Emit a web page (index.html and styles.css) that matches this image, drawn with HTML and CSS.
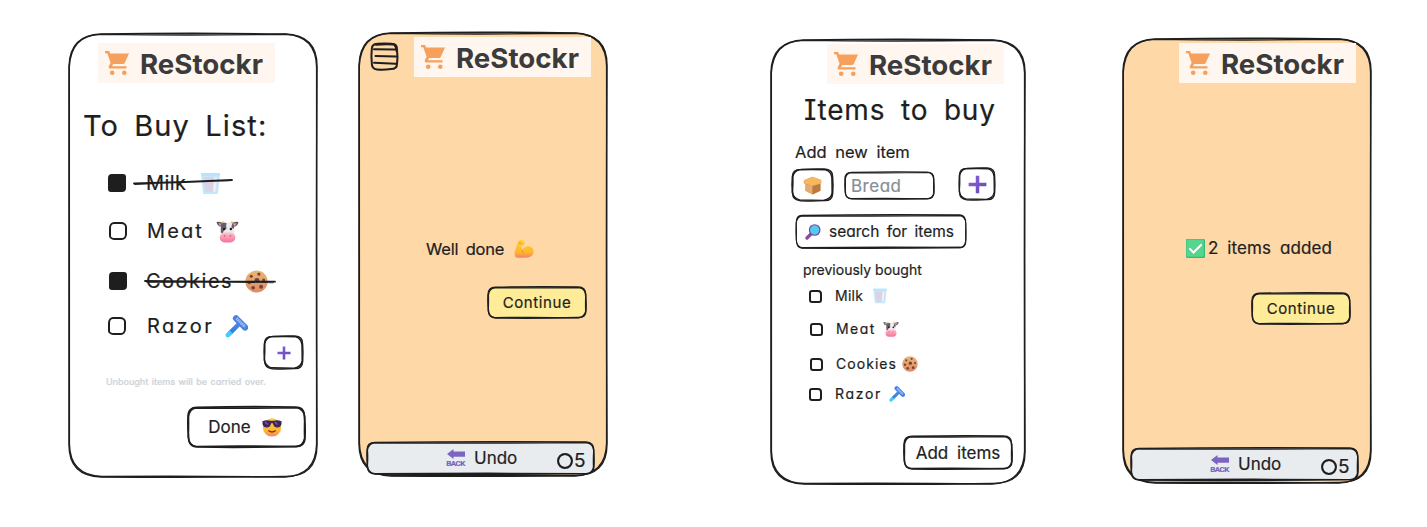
FILE: index.html
```html
<!DOCTYPE html>
<html lang="en">
<head>
<meta charset="utf-8">
<title>ReStockr wireframes</title>
<link rel="stylesheet" href="styles.css">
</head>
<body>
<svg class="defs" width="0" height="0" aria-hidden="true">
  <defs>
    <linearGradient id="g-violet" x1="0" y1="0" x2="1" y2="1"><stop offset="0" stop-color="#8b62d9"/><stop offset="1" stop-color="#6248b5"/></linearGradient>
    <linearGradient id="g-skin" x1="0" y1="0" x2="0" y2="1"><stop offset="0" stop-color="#ffd02e"/><stop offset=".7" stop-color="#ffb52e"/><stop offset="1" stop-color="#f4806a"/></linearGradient>
    <linearGradient id="g-blue" x1="1" y1="0" x2="0" y2="1"><stop offset="0" stop-color="#4a86e8"/><stop offset=".7" stop-color="#2f7fe0"/><stop offset="1" stop-color="#3fd0ff"/></linearGradient>
    <linearGradient id="g-cookie" x1="0" y1="0" x2="0" y2="1"><stop offset="0" stop-color="#e9b877"/><stop offset="1" stop-color="#dd8a66"/></linearGradient>
    <linearGradient id="g-nose" x1="0" y1="0" x2="0" y2="1"><stop offset="0" stop-color="#ffc4c8"/><stop offset="1" stop-color="#f4709a"/></linearGradient>
  </defs>
  <symbol id="cart" viewBox="0 0 24 24">
    <path d="M0 0h4l1.200 2.500H24l-4.300 9.600q-.5 1-1.700 1H8.200L7 15.300h14.500v2.300H5.500q-2.500-.4-1.600-2.700L5.600 11.800 2.300 2.300H0z" fill="#f5a05c"/>
    <circle cx="7.200" cy="21.700" r="2.300" fill="#f5a05c"/><circle cx="19.300" cy="21.700" r="2.300" fill="#f5a05c"/>
  </symbol>
  <symbol id="milk" viewBox="0 0 24 24">
    <path d="M2 1h20l-2.300 22H4.300z" fill="#c3e7fb"/><path d="M5 5.500h14L17.500 20.500H6.500z" fill="#d9d3e3"/><path d="M15.500 5.500H19L17.500 20.500h-3z" fill="#f1ecf7"/><path d="M2 1h20l-.3 3H2.300z" fill="#b4e4ff"/>
  </symbol>
  <symbol id="cow" viewBox="0 0 24 24">
    <path d="M7 4Q6 3 7 .4L10 4zM17 4q1-1 0-3.600L14 4z" fill="#f3c37b"/>
    <path d="M.5 2Q5 1 8 4L6 7Q1.500 7 .5 2z" fill="#5b565f"/><path d="M2.500 3Q5 3 7 5L5.500 6Q3 6 2.500 3z" fill="#e88f9c"/>
    <path d="M23.500 2Q19 1 16 4l2 3q4.500 0 5.500-5z" fill="#5b565f"/><path d="M21.500 3Q19 3 17 5l1.500 1q2.500 0 3-3z" fill="#e88f9c"/>
    <path d="M5 4Q12 1.500 19 4v12H5z" fill="#eeeaf0"/><path d="M5 4q3-1.500 6-1-1 4 0 6-3 1-4 5L5 13z" fill="#656067"/><path d="M17 3.500q2 .5 2 4l-1 2-2-2z" fill="#656067"/>
    <circle cx="8.500" cy="9.500" r="1.300" fill="#211d25"/><circle cx="15.500" cy="9.500" r="1.300" fill="#211d25"/>
    <rect x="3.800" y="13" width="16.400" height="10.500" rx="5.200" fill="url(#g-nose)"/><circle cx="9" cy="16.500" r=".9" fill="#d85a80"/><circle cx="15" cy="16.500" r=".9" fill="#d85a80"/>
  </symbol>
  <symbol id="cookie" viewBox="0 0 24 24">
    <circle cx="12" cy="12" r="11.600" fill="url(#g-cookie)"/>
    <g fill="#74423b"><circle cx="6.500" cy="6.500" r="1.600"/><circle cx="14.500" cy="4.300" r="1.700"/><circle cx="12.500" cy="10.800" r="2.500"/><circle cx="19.500" cy="10.500" r="1.600"/><circle cx="4.500" cy="13" r="1.800"/><circle cx="8.500" cy="18.500" r="1.900"/><circle cx="16.800" cy="17.500" r="2"/></g>
  </symbol>
  <symbol id="razor" viewBox="0 0 24 24">
    <path d="M14.500 9.500 3 21" stroke="url(#g-blue)" stroke-width="4.600" stroke-linecap="round"/><path d="M5 19l-2 2" stroke="#3fd0ff" stroke-width="4.200" stroke-linecap="round"/>
    <path d="M11.500 3.500 21 13" stroke="#4384e6" stroke-width="6.500" stroke-linecap="round"/><path d="M12 3.500 20.800 12.300" stroke="#b3b6e6" stroke-width="3" stroke-dasharray="1.500 .5"/>
  </symbol>
  <symbol id="cool" viewBox="0 0 24 24">
    <circle cx="12" cy="12.500" r="11" fill="url(#g-skin)"/>
    <path d="M.5 5q5-2 9.500-.5h4Q18.500 3 23.500 5q.5 7-4.500 7.500-5 .5-6-5h-2q-1 5.500-6 5Q0 12 .5 5z" fill="#40265f"/><path d="M3.500 6 7 9M15.500 6l3 3" stroke="#8155c4" stroke-width="1.300"/>
    <path d="M8 16.500q4 3 8 0" fill="none" stroke="#733324" stroke-width="1.500" stroke-linecap="round"/>
  </symbol>
  <symbol id="arm" viewBox="0 0 24 24">
    <path d="M5 2.500Q10-.5 12.500 3.500q1 3-1.500 4.500H8.500l1.500 5Q14 7.500 19.500 9 24.500 12 23.300 17 21 22.500 14 22.500H3.500Q0 21.500 1 15z" fill="url(#g-skin)"/><path d="M10 13q-.5 3 2 4.500M6 4.500l3 1" fill="none" stroke="#e98e25" stroke-width="1.100"/>
  </symbol>
  <symbol id="plus" viewBox="0 0 24 24"><path d="M9.800.8h4.400v9h9v4.400h-9v9H9.800v-9h-9V9.800h9z" fill="url(#g-violet)"/></symbol>
  <symbol id="bread" viewBox="0 0 24 24">
    <path d="M1 5.500 12 1l11 4v4l-1 1v8.500L12 23.500 3 18.500V10L1 9z" fill="#d79550"/><path d="M1 5.500 12 1l11 4v4l-11 3.500L2 9z" fill="#f5b75f"/><path d="M12 12.500V23.500L3 18.500V10z" fill="#e4ab72"/><path d="M12 12.500 22 10v8.500l-10 5z" fill="#bd7942"/>
  </symbol>
  <symbol id="lens" viewBox="0 0 24 24">
    <path d="M9.500 14.500 3 21" stroke="#8b4a9b" stroke-width="5" stroke-linecap="round"/><circle cx="14.500" cy="9" r="8.800" fill="#6a4b9d"/><circle cx="14.500" cy="9" r="7" fill="#55c8ee"/>
  </symbol>
  <symbol id="arrow" viewBox="0 0 18 10"><path d="M0 5 6.500 0v2.500H18v5.200H6.500V10z" fill="#7c65c1"/></symbol>
  <symbol id="check" viewBox="0 0 24 24">
    <rect width="24" height="24" rx="1.500" fill="#35b877"/><rect x=".5" y=".5" width="22" height="22" rx="1" fill="#55d58d"/><path d="M5 12.500l4.500 4.500L19 7.500" fill="none" stroke="#fff" stroke-width="2.600" stroke-linecap="round"/>
  </symbol>
  <symbol id="phone-frame" viewBox="0 0 248 443" overflow="visible" preserveAspectRatio="none">
    <path d="M32 0Q124-1.500 216 0Q248 1 248 32Q247 220 248 411Q248 443 216 442.500Q124 444 32 443Q0 442 0 411Q-.6 220 0 32Q1 1 32 0z"/>
    <path d="M31 .4Q124 1.500 217 .3Q247 2 247.600 33Q248.400 220 247.600 410Q247 442 215 443Q124 441.800 33 442.500Q1 441.500 .4 410Q.8 220 .3 33Q2 1.500 31 .4z" fill="none"/>
  </symbol>
  <symbol id="box-square" viewBox="0 0 38 33" overflow="visible" preserveAspectRatio="none">
    <path d="M8 .4Q19-.2 30 0Q38 .5 37.600 8Q38.300 16 37.700 25Q37.500 33 30 32.600Q19 33.300 8 32.700Q.6 32 .6 25Q-.4 16 .3 8Q.5 .4 8 .4z"/>
    <path d="M7 .8Q19 .3 31 .8Q36.500 2.500 37 9Q37.200 17 37.200 25Q36 31.500 29 32.300Q19 32 7 31.800Q1.400 30 .3 24Q1 16 .8 8Q1.500 2 7 .8z" fill="none"/>
  </symbol>
  <symbol id="box-wide" viewBox="0 0 100 32" overflow="visible" preserveAspectRatio="none">
    <path d="M8 .3Q50-.7 92 0Q100 0 99.500 8Q100.500 16 100 24Q100 32 92 31.500Q50 32.700 8 32Q0 31.500 .5 24Q-.5 16 0 8Q0 0 8 .3z"/>
    <path d="M7 .8Q50 1.200 93 .6Q98.700 1.500 99.800 8Q99.400 17 99.700 25Q98.600 31.300 92 31.800Q50 31 7 31.600Q1 31 .2 24Q.6 16 .4 8Q1.400 1.200 7 .8z" fill="none"/>
  </symbol>
  <symbol id="box-bar" viewBox="0 0 228 32" overflow="visible" preserveAspectRatio="none">
    <path d="M8 .4Q114-.9 220 0Q228 .4 227.600 8Q228.500 16 228 24Q228 32 220 31.600Q114 32.900 8 32Q0 31.500 .5 24Q-.5 16 .1 8Q0 .4 8 .4z"/>
    <path d="M8 .8Q114 1.300 220 .6Q226.700 1.500 227.800 8Q227.200 17 227.500 25Q226.600 31.200 220 31.600Q114 31 8 31.700Q1.500 31 .3 24Q1 16 .4 8Q1.500 1.400 8 .8z" fill="none"/>
  </symbol>
</svg>

<main class="board">
  <section class="phone phone-list">
    <svg class="frame"><use href="#phone-frame" width="100%" height="100%"/></svg>
    <div class="logo"><svg><use href="#cart"/></svg><span>ReStockr</span></div>
    <h1>To Buy List:</h1>
    <ul class="list">
      <li class="row milk"><i class="box done"></i><span>Milk</span><svg class="emoji"><use href="#milk"/></svg>
        <svg class="strike" width="98" height="6"><path d="M0 4.500Q48 3.500 98 1M1 5Q50 2.500 97 1.300"/></svg></li>
      <li class="row meat"><i class="box"></i><span>Meat</span><svg class="emoji"><use href="#cow"/></svg></li>
      <li class="row cookies"><i class="box done"></i><span>Cookies</span><svg class="emoji"><use href="#cookie"/></svg>
        <svg class="strike" width="131" height="6"><path d="M0 2Q60 3 130 2.700M2 3Q66 2 128 3.300"/></svg></li>
      <li class="row razor"><i class="box"></i><span>Razor</span><svg class="emoji"><use href="#razor"/></svg></li>
    </ul>
    <div class="btn btn-plus"><svg class="frame"><use href="#box-square" width="100%" height="100%"/></svg><svg class="emoji"><use href="#plus"/></svg></div>
    <p class="note">Unbought items will be carried over.</p>
    <div class="btn btn-done"><svg class="frame"><use href="#box-wide" width="100%" height="100%"/></svg><span>Done</span><svg class="emoji"><use href="#cool"/></svg></div>
  </section>

  <section class="phone peach phone-done">
    <svg class="frame"><use href="#phone-frame" width="100%" height="100%"/></svg>
    <div class="top">
      <svg class="menu" width="27" height="27" viewBox="0 0 27 27"><path d="M6 .8Q14 0 21 .8Q26.500 1 26 7Q27 14 26 21Q26 26 20 26Q13 27 6 26.500Q.6 26 .8 20Q0 13 .8 6Q1 1 6 .8zM5 1.800Q14 .8 23 1.500Q25.700 4 25.500 8M3 6.300l21 .3M4.500 13l20.500 .6M3 19.800l21.500 .9"/></svg>
      <div class="logo"><svg><use href="#cart"/></svg><span>ReStockr</span></div>
    </div>
    <p class="message"><span>Well done</span><svg class="emoji"><use href="#arm"/></svg></p>
    <div class="btn yellow"><svg class="frame"><use href="#box-wide" width="100%" height="100%"/></svg><span>Continue</span></div>
    <div class="undo"><svg class="frame"><use href="#box-bar" width="100%" height="100%"/></svg>
      <span class="back"><svg><use href="#arrow"/></svg><b>BACK</b></span><span class="label">Undo</span><i class="ring"></i><span class="count">5</span></div>
  </section>

  <section class="phone phone-add">
    <svg class="frame"><use href="#phone-frame" width="100%" height="100%"/></svg>
    <div class="logo"><svg><use href="#cart"/></svg><span>ReStockr</span></div>
    <h1>Items to buy</h1>
    <h2>Add new item</h2>
    <div class="fields">
      <div class="btn pick"><svg class="frame"><use href="#box-square" width="100%" height="100%"/></svg><svg class="emoji"><use href="#bread"/></svg></div>
      <div class="btn input"><svg class="frame"><use href="#box-wide" width="100%" height="100%"/></svg><span>Bread</span></div>
      <div class="btn add"><svg class="frame"><use href="#box-square" width="100%" height="100%"/></svg><svg class="emoji"><use href="#plus"/></svg></div>
    </div>
    <div class="btn search"><svg class="frame"><use href="#box-bar" width="100%" height="100%"/></svg><svg class="emoji"><use href="#lens"/></svg><span>search for items</span></div>
    <h3>previously bought</h3>
    <ul class="list small">
      <li class="row milk"><i class="box"></i><span>Milk</span><svg class="emoji"><use href="#milk"/></svg></li>
      <li class="row meat"><i class="box"></i><span>Meat</span><svg class="emoji"><use href="#cow"/></svg></li>
      <li class="row cookies"><i class="box"></i><span>Cookies</span><svg class="emoji"><use href="#cookie"/></svg></li>
      <li class="row razor"><i class="box"></i><span>Razor</span><svg class="emoji"><use href="#razor"/></svg></li>
    </ul>
    <div class="btn submit"><svg class="frame"><use href="#box-wide" width="100%" height="100%"/></svg><span>Add items</span></div>
  </section>

  <section class="phone peach phone-added">
    <svg class="frame"><use href="#phone-frame" width="100%" height="100%"/></svg>
    <div class="logo"><svg><use href="#cart"/></svg><span>ReStockr</span></div>
    <p class="message"><svg class="emoji"><use href="#check"/></svg><span>2 items added</span></p>
    <div class="btn yellow"><svg class="frame"><use href="#box-wide" width="100%" height="100%"/></svg><span>Continue</span></div>
    <div class="undo"><svg class="frame"><use href="#box-bar" width="100%" height="100%"/></svg>
      <span class="back"><svg><use href="#arrow"/></svg><b>BACK</b></span><span class="label">Undo</span><i class="ring"></i><span class="count">5</span></div>
  </section>
</main>
</body>
</html>
```
FILE: styles.css
```css
* { box-sizing: border-box; }
body { margin: 0; background: #fff; color: #1e1e1e; font-family: Inter, "Open Sans", sans-serif; font-feature-settings: "cv11", "cv08", "ss03"; -webkit-text-stroke: .2px; overflow: hidden; }
h1, h2, h3, p, ul { margin: 0; padding: 0; font-weight: 400; list-style: none; white-space: nowrap; }
svg { display: block; flex: none; }
.defs { position: absolute; }

.board { display: flex; align-items: flex-start; height: 527px; padding: 33px 0 0 69px; }
.phone { position: relative; display: flex; flex-direction: column; align-items: flex-start; flex: none; width: 248px; height: 443px; }
.phone-list { margin-top: 1px; }
.phone-done { margin-left: 42px; }
.phone-add { width: 254px; height: 444px; margin: 7px 0 0 164px; }
.phone-added { height: 444px; margin: 6px 0 0 98px; }

/* hand-drawn outline stretched behind its parent */
.frame { position: absolute; inset: 0; z-index: -1; width: 100%; height: 100%; overflow: visible; fill: #fff; stroke: #1e1e1e; stroke-width: 1.400; }
.frame path { vector-effect: non-scaling-stroke; }
.peach > .frame { fill: #ffd8a8; }
.phone { z-index: 0; }

.logo { display: flex; align-items: center; width: 177px; height: 40px; padding-left: 7px; background: #fff6ef; color: #3b3b3b; }
.logo svg { width: 24px; height: 24px; }
.logo span { margin: 1px 0 0 11px; font-size: 27.700px; font-weight: 700; line-height: 40px; font-feature-settings: normal; -webkit-text-stroke: 0; }
.phone-list .logo { margin: 9px 0 0 29px; }
.phone-add .logo { margin: 4px 0 0 56px; }
.phone-added .logo { margin: 4px 0 0 56px; }
.top { display: flex; padding: 4px 0 0 12px; }
.top .logo { margin-left: 16px; }
.menu { margin-top: 6px; fill: none; stroke: #1e1e1e; stroke-width: 2; stroke-linecap: round; overflow: visible; }

h1 { font-size: 29px; line-height: 40px; }
.phone-list h1 { margin: 23px 0 0 14px; letter-spacing: 1.100px; word-spacing: 6px; }
.phone-add h1 { margin: 6px 0 0 33px; font-size: 28px; letter-spacing: .8px; word-spacing: 7px; }
h2 { margin: 12px 0 0 24px; font-size: 16.500px; line-height: 20px; word-spacing: 4px; }
h3 { margin: 12px 0 0 32px; font-size: 14px; line-height: 20px; }

.row { position: relative; display: flex; align-items: center; height: 24px; font-size: 20px; line-height: 24px; }
.box { flex: none; width: 18px; height: 18px; border: 2px solid #1e1e1e; border-radius: 5px 6px 5px 6px / 6px 5px 6px 4px; }
.box.done { background: #1e1e1e; border-radius: 4px 3px 4px 3px; }
.row span { margin-left: 20px; }
.emoji { width: 23px; height: 23px; }
.row.milk span { width: 53px; letter-spacing: .02em; }
.row.meat span { width: 69px; letter-spacing: .105em; }
.row.cookies span { width: 99px; letter-spacing: .075em; }
.row.razor span { width: 78px; letter-spacing: .12em; }
.phone-list .list { margin: 25px 0 0 40px; }
.phone-list .milk { margin-left: -1px; }
.phone-list .meat { margin-top: 24px; }
.phone-list .cookies { margin-top: 26px; }
.phone-list .cookies span { margin-left: 19px; }
.phone-list .razor { margin: 21px 0 0 -1px; }
.phone-list .razor span { margin-left: 21px; }
.strike { position: absolute; top: 8px; left: 26px; fill: none; stroke: #1e1e1e; stroke-width: 1.800; stroke-linecap: round; overflow: visible; }
.cookies .strike { top: 10px; left: 36px; }

.small .row { height: 16px; font-size: 14px; line-height: 16px; }
.small .box { width: 13px; height: 13px; border-radius: 3px 4px 3px 3px; }
.small .emoji { width: 16px; height: 16px; }
.small .row span { margin-left: 13px; }
.small .milk span { width: 37px; }
.small .meat span { width: 47px; }
.small .cookies span { width: 66px; }
.small .razor span { width: 54px; }
.small { margin: 8px 0 0 38px; }
.small .meat { margin: 17px 0 0 1px; }
.small .cookies { margin: 19px 0 0 1px; }
.small .razor { margin-top: 14px; }

.btn { position: relative; display: flex; align-items: center; justify-content: center; flex: none; white-space: nowrap; }
.btn-plus { width: 39px; height: 33px; margin: -2px 0 0 195px; }
.btn-plus .emoji { width: 14px; height: 14px; }
.note { margin: 7px 0 0 37px; color: #ced4da; font-size: 9px; font-weight: 500; line-height: 12px; letter-spacing: -.040px; word-spacing: 1.200px; }
.btn-done { width: 117px; height: 40px; margin: 19px 0 0 119px; gap: 11px; padding-right: 3px; font-size: 17px; }
.btn-done .emoji { width: 20px; height: 20px; }

.message { display: flex; align-items: center; height: 24px; font-size: 16.500px; }
.message .emoji { width: 20px; height: 20px; }
.phone-done .message { margin: 160px 0 0 67px; gap: 10px; word-spacing: 3px; letter-spacing: -.2px; }
.phone-added .message { margin: 153px 0 0 63px; gap: 3px; font-size: 17px; letter-spacing: .1px; word-spacing: 4px; }
.phone-added .message .emoji { width: 19px; height: 19px; }
.yellow { width: 98px; height: 31px; margin: 26px 0 0 129px; font-size: 15px; letter-spacing: .6px; }
.yellow .frame { fill: #ffec99; }
.phone-added .yellow { margin-top: 33px; }

.undo { position: relative; display: flex; align-items: center; width: 227px; height: 32px; margin: 124px 0 0 8px; padding-left: 79px; font-size: 17px; }
.undo .frame { fill: #e9ecef; }
.back { display: flex; flex-direction: column; align-items: center; width: 19px; gap: 1px; color: #7c65c1; }
.back svg { width: 18px; height: 10px; }
.back b { font: 700 8px/8px "Roboto", sans-serif; letter-spacing: -.5px; }
.label { width: 45px; margin-left: 9px; }
.ring { flex: none; width: 16px; height: 16px; margin: 6px 0 0 38px; border: 2.500px solid #1e1e1e; border-radius: 50%; border-width: 2px; outline: .5px solid #1e1e1e; outline-offset: -2px; }
.count { margin: 6px 0 0 1px; font-size: 19px; line-height: 20px; }

.fields { display: flex; align-items: flex-start; margin: 6px 0 0 21px; }
.pick { width: 41px; height: 32px; margin-top: 1px; }
.pick .emoji, .add .emoji { width: 19px; height: 19px; }
.input { justify-content: flex-start; width: 89px; height: 27px; margin: 4px 0 0 12px; padding-left: 6px; color: #868e96; font-size: 17px; letter-spacing: .5px; }
.add { width: 36px; height: 32px; margin-left: 25px; }
.search { width: 170px; height: 33px; margin: 14px 0 0 25px; padding-right: 3px; gap: 8px; font-size: 15.500px; word-spacing: 3px; }
.search .emoji { width: 16px; height: 16px; }
.submit { width: 108px; height: 33px; margin: 34px 0 0 133px; font-size: 17px; word-spacing: 4px; }
```
